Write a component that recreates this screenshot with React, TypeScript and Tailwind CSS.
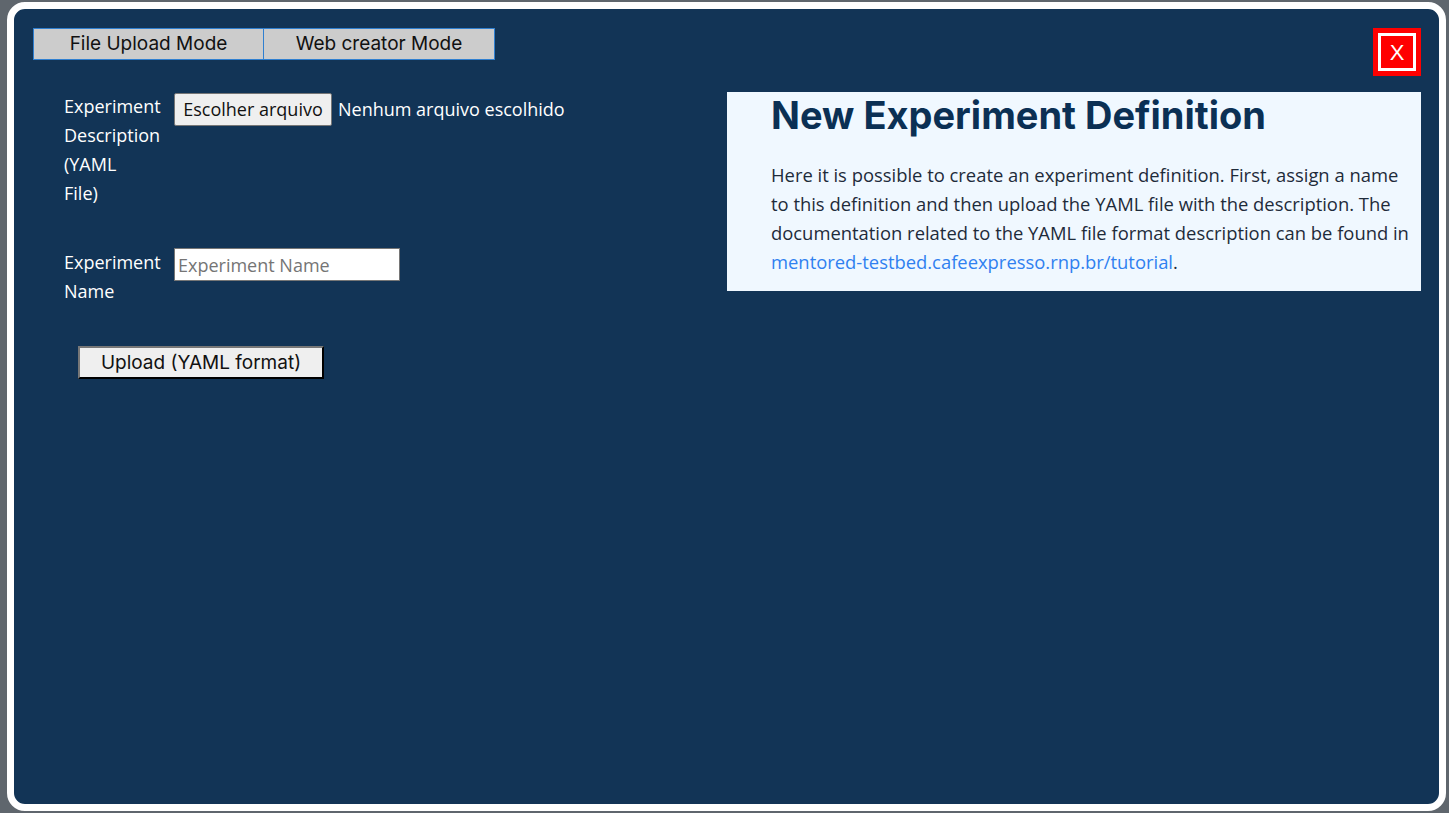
export default function App() {
  return (
    <div className="h-[813px] w-[1449px] bg-[#5f666d] pl-[7px] pr-[3px] pt-[2px] pb-[2px]">
      <div className="flex h-full flex-col rounded-[18px] border-[7px] border-white bg-[#123456] pl-[19px] pr-[18px] pt-[19px]">
        <div className="flex items-start justify-between">
          <div className="flex" style={{ fontFamily: 'Inter, sans-serif' }}>
            <button className="h-[32px] w-[231px] border border-[#2f7fd0] bg-[#cccccc] text-[19px] text-[#111]">
              File Upload Mode
            </button>
            <button className="h-[32px] w-[231px] border border-l-0 border-[#2f7fd0] bg-[#cccccc] text-[19px] text-[#111]">
              Web creator Mode
            </button>
          </div>
          <button className="flex h-[48px] w-[48px] items-center justify-center bg-[#ff0000]">
            <span
              className="flex h-[38px] w-[38px] items-center justify-center border-[3px] border-white text-[22px] text-white"
              style={{ fontFamily: '"Liberation Sans", sans-serif' }}
            >
              X
            </span>
          </button>
        </div>

        <div className="mt-[16px] grid grid-cols-2 items-start">
          <div className="pl-[31px] text-[18px] leading-[29px] text-white" style={{ fontFamily: '"Open Sans", sans-serif' }}>
            <div className="flex items-start">
              <label className="w-[110px] shrink-0">
                Experiment
                <br />
                Description
                <br />
                (YAML
                <br />
                File)
              </label>
              <div className="flex items-center">
                <span className="mt-[1px] flex h-[33px] w-[158px] items-center justify-center rounded-[2px] border border-[#767676] bg-[#efefef] text-[#111]">
                  Escolher arquivo
                </span>
                <span className="ml-[6px]">Nenhum arquivo escolhido</span>
              </div>
            </div>

            <div className="mt-[40px] flex items-start">
              <label className="w-[110px] shrink-0">
                Experiment
                <br />
                Name
              </label>
              <input
                placeholder="Experiment Name"
                className="h-[33px] w-[226px] border border-[#767676] bg-white px-[3px] text-[18px] text-[#111] placeholder:text-[#757575] outline-none"
              />
            </div>

            <button
              className="ml-[14px] mt-[40px] h-[33px] w-[246px] border-2 border-b-black border-l-[#777] border-r-black border-t-[#777] bg-[#efefef] text-[19px] text-[#111]"
              style={{ fontFamily: 'Inter, sans-serif' }}
            >
              Upload (YAML format)
            </button>
          </div>

          <div className="bg-[#f0f8ff] pb-[15px] pl-[44px] pr-[10px]">
            <h1
              className="text-[38px] font-bold leading-[46px] text-[#0b3054]"
              style={{ fontFamily: 'Inter, sans-serif' }}
            >
              New Experiment Definition
            </h1>
            <p className="mt-[22px] text-[18.4px] leading-[29px] text-[#1e2b3a]" style={{ fontFamily: '"Open Sans", sans-serif' }}>
              Here it is possible to create an experiment definition. First, assign a name to this definition and then
              upload the YAML file with the description. The documentation related to the YAML file format description
              can be found in{' '}
              <a className="text-[#2f80f0]" href="#">
                mentored-testbed.cafeexpresso.rnp.br/tutorial
              </a>
              .
            </p>
          </div>
        </div>
      </div>
    </div>
  )
}
